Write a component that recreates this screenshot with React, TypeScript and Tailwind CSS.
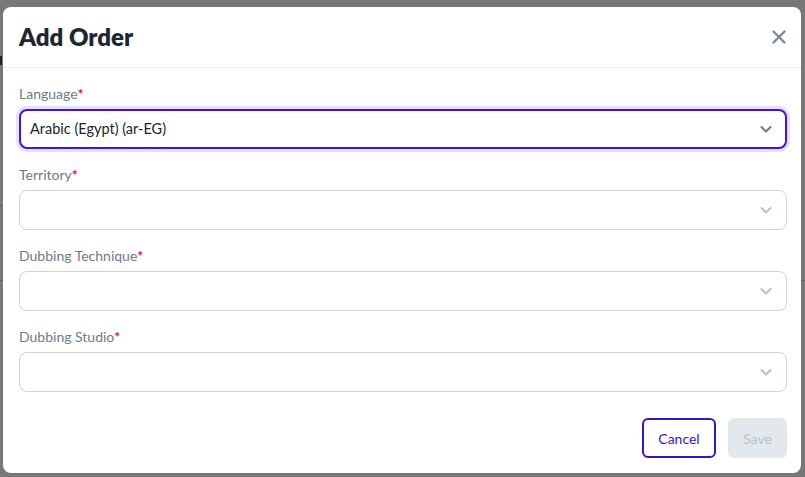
import React from "react";

function Chevron({ dark }: { dark?: boolean }) {
  return (
    <svg width="14" height="14" viewBox="0 0 14 14" fill="none" className="shrink-0">
      <path d="M2.5 5l4.5 4.5L11.5 5" stroke={dark ? "#6b7a8b" : "#b3c2cd"} strokeWidth="2" strokeLinecap="round" strokeLinejoin="round" />
    </svg>
  );
}

function Field({ label, value, focused }: { label: string; value?: string; focused?: boolean }) {
  return (
    <div className="flex flex-col">
      <div className="h-5 text-[14px] leading-5 text-[#6b7b8e]">
        {label}
        <span className="font-bold text-[#d1134f]">*</span>
      </div>
      <div
        className={
          focused
            ? "mt-[5px] flex h-10 items-center justify-between rounded-[8px] border-2 border-[#4510e0] pl-[9px] pr-[12px] ring-[3px] ring-[#e6e2fc]"
            : "mt-[5px] flex h-10 items-center justify-between rounded-[8px] border border-[#cfd3d8] pl-[10px] pr-[13px]"
        }
      >
        <span className="text-[14.5px] text-[#1c2430]">{value}</span>
        <Chevron dark={focused} />
      </div>
    </div>
  );
}

export default function App() {
  return (
    <div className="relative h-[477px] w-[805px] overflow-hidden bg-[#777777]" style={{ fontFamily: "Lato, 'Noto Sans', sans-serif" }}>
      <div className="absolute left-0 top-[205px] h-px w-[3px] bg-[#5e6066]" />
      <div className="absolute left-0 top-[280px] h-px w-[3px] bg-[#5e6066]" />
      <div className="absolute right-0 top-[280px] h-px w-[4px] bg-[#5e6066]" />
      <div className="absolute left-0 top-[56px] h-[9px] w-[2px] bg-[#222]" />
      <div className="absolute left-[3px] top-[7px] flex h-[466px] w-[798px] flex-col rounded-[8px] bg-white">
        <div className="flex h-[61px] items-center justify-between border-b border-[#eef0f2] pl-[16px] pr-[15px]">
          <div className="text-[24px] font-extrabold text-[#1d2733]">Add Order</div>
          <svg width="14" height="14" viewBox="0 0 14 14" fill="none">
            <path d="M1.5 1.5l11 11M12.5 1.5l-11 11" stroke="#7a8a9b" strokeWidth="2.4" strokeLinecap="round" />
          </svg>
        </div>
        <div className="flex flex-col gap-4 pl-4 pr-[14px] pt-4">
          <Field label="Language" value="Arabic (Egypt) (ar-EG)" focused />
          <Field label="Territory" />
          <Field label="Dubbing Technique" />
          <Field label="Dubbing Studio" />
        </div>
        <div className="mt-[26px] flex justify-end gap-3 pl-4 pr-[14px]">
          <button className="h-10 w-[74px] rounded-[6px] border-2 border-[#3a12cc] text-[14px] text-[#3a12cc]">Cancel</button>
          <button className="h-10 w-[59px] rounded-[6px] bg-[#e2e8ec] text-[14px] text-[#b7c3cc]">Save</button>
        </div>
      </div>
    </div>
  );
}
